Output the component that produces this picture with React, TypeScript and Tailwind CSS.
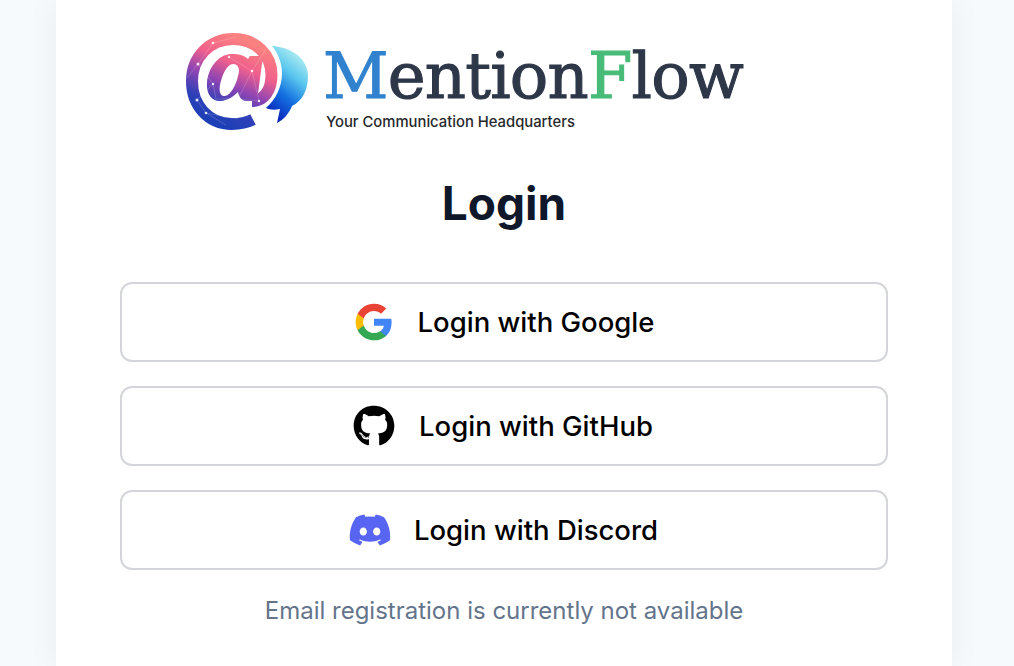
import { FaDiscord, FaGithub } from "react-icons/fa";

const inter = { fontFamily: "Inter, sans-serif" };

function LogoMark() {
    return (
        <svg width="124" height="100" viewBox="0 0 124 100" className="shrink-0">
            <defs>
                <linearGradient id="at" gradientUnits="userSpaceOnUse" x1="26" y1="90" x2="62" y2="10">
                    <stop offset="0" stopColor="#1b3fb6" />
                    <stop offset="0.22" stopColor="#2f40b8" />
                    <stop offset="0.48" stopColor="#9245b2" />
                    <stop offset="0.72" stopColor="#f0608c" />
                    <stop offset="1" stopColor="#fb8080" />
                </linearGradient>
                <linearGradient id="bubble" x1="0.75" y1="0" x2="0.3" y2="1">
                    <stop offset="0" stopColor="#c4f6f2" />
                    <stop offset="0.35" stopColor="#5cc8ee" />
                    <stop offset="0.65" stopColor="#1470e0" />
                    <stop offset="1" stopColor="#0a1fb8" />
                </linearGradient>
            </defs>
            <path
                d="M86 13 C106 14 122 26 122 43 C122 58 116 68 106 73 C103 81 97 87 91 90 C92 85 93 81 94 76 C89 77 84 77 80 75 C90 66 96 54 96 40 C96 30 92 20 86 13 Z"
                fill="url(#bubble)"
            />
            {/* outer ring of the @ */}
            <path
                d="M67 86.500 C61 89.500 54 91 46 91 C22 91 6 72 6 48 C6 24 24 6 47 6 C70 6 85.500 22 85.500 42 C85.500 57 78 68 66 68"
                fill="none"
                stroke="url(#at)"
                strokeWidth="12"
            />
            {/* inner a, bowl and stem in one shape with the hole cut out */}
            <path
                fillRule="evenodd"
                fill="url(#at)"
                d="M77 23 L64 23 L62 26 C58 22 52 20.500 45 21 C31 22 22 36 21 50 C20 61 26 69 35 68 C41 67.500 47 64 52 59 C53 64 56 68 60 68 L71 68 Z M48 31 C53 32 54 37 52 43 C50 52 45 62 39 63 C34 63.500 33 58 34 52 C36 42 41 30 48 31 Z"
            />
            <g stroke="#ffffff" strokeOpacity="0.3" strokeWidth="0.6" fill="none">
                <path d="M1 45 L12 31 L27 10 L50 4 M12 31 L27 51 L11 67 L20 80 L40 92 M43 24 L66 38 L73 68 M27 51 L30 66 L52 66 L73 68 M52 66 L66 38 M20 80 L52 86 M66 38 L80 16" />
            </g>
            <g fill="#ffffff" fillOpacity="0.85">
                <circle cx="27" cy="10" r="1.300" />
                <circle cx="12" cy="31" r="1.500" />
                <circle cx="11" cy="67" r="1.500" />
                <circle cx="20" cy="80" r="1.300" />
                <circle cx="43" cy="24" r="1.200" />
                <circle cx="66" cy="38" r="1.300" />
                <circle cx="27" cy="51" r="1.200" />
                <circle cx="52" cy="66" r="1.300" />
                <circle cx="73" cy="68" r="1.200" />
            </g>
        </svg>
    );
}

function GoogleIcon() {
    return (
        <svg width="40" height="40" viewBox="0 0 24 24">
            <path fill="#4285F4" d="M22.560 12.250c0-.78-.07-1.530-.2-2.250H12v4.260h5.920c-.26 1.370-1.040 2.530-2.210 3.310v2.770h3.570c2.080-1.920 3.280-4.740 3.280-8.090z" />
            <path fill="#34A853" d="M12 23c2.970 0 5.460-.98 7.280-2.660l-3.570-2.770c-.98.660-2.230 1.060-3.710 1.060-2.860 0-5.290-1.930-6.160-4.530H2.180v2.840C3.990 20.530 7.700 23 12 23z" />
            <path fill="#FBBC05" d="M5.840 14.090c-.22-.66-.35-1.360-.35-2.090s.13-1.430.35-2.090V7.070H2.180C1.430 8.550 1 10.220 1 12s.43 3.450 1.180 4.930l2.850-2.220.81-.62z" />
            <path fill="#EA4335" d="M12 5.380c1.620 0 3.060.56 4.210 1.640l3.150-3.150C17.450 2.090 14.970 1 12 1 7.700 1 3.990 3.470 2.180 7.070l3.660 2.840c.87-2.600 3.300-4.530 6.160-4.530z" />
        </svg>
    );
}

const providers = [
    { name: "Google", icon: <GoogleIcon /> },
    { name: "GitHub", icon: <FaGithub className="w-[42px] h-[42px] -ml-0.5 text-black" /> },
    { name: "Discord", icon: <FaDiscord className="w-11 h-11 -mx-0.5 text-[#5865f2]" /> },
];

export default function App() {
    return (
        <div className="h-screen overflow-hidden bg-[#f7fafd] flex justify-center pr-[6px]" style={inter}>
            <div className="w-[896px] h-full bg-white shadow-[0_0_30px_rgba(15,23,42,0.06)] flex flex-col items-center">
                {/* Logo */}
                <div className="w-full pl-[130px] pt-[33px] flex items-start">
                    <LogoMark />
                    <div className="ml-4 flex flex-col pt-[7px]">
                        <div
                            className="-ml-[3px] text-[64px] leading-[72px] text-[#2d3748] tracking-[-0.800px] [-webkit-text-stroke:1.100px_currentColor]"
                            style={{ fontFamily: "'DejaVu Serif', serif" }}
                        >
                            <span className="text-[#3182ce]">M</span>ention<span className="text-[#48bb78]">F</span>low
                        </div>
                        <div className="mt-px text-[14.800px] leading-[18px] font-medium text-[#26282c]">
                            Your Communication Headquarters
                        </div>
                    </div>
                </div>

                <h1 className="mt-[42px] text-[46px] leading-[56px] font-bold text-[#0f172a]">Login</h1>

                <div className="mt-[51px] w-[768px] flex flex-col gap-6">
                    {providers.map((p) => (
                        <button
                            key={p.name}
                            className="h-20 rounded-xl border-2 border-[#d3d5da] bg-white flex items-center justify-center gap-6 text-black text-[27.500px] font-medium"
                        >
                            {p.icon}
                            <span className="pt-0.5">Login with {p.name}</span>
                        </button>
                    ))}
                </div>

                <p className="mt-[26px] text-[24px] leading-[30px] text-[#64748b]">
                    Email registration is currently not available
                </p>
            </div>
        </div>
    );
}
